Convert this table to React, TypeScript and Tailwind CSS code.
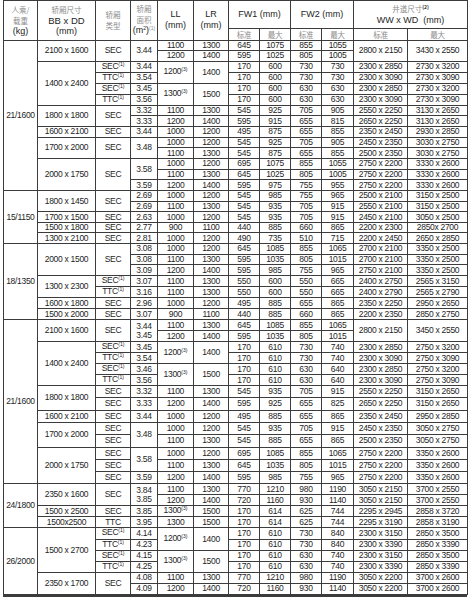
type Cell = string | [string, number];

const rows: Cell[][] = [
  // 21/1600
  [["21/1600", 14], ["2100 x 1600", 2], ["SEC", 2], ["3.44", 2], "1100", "1300", "645", "1075", "855", "1055", ["2800 x 2150", 2], ["3430 x 2550", 2]],
  ["1200", "1400", "595", "1025", "805", "1005"],
  [["1400 x 2400", 4], "SEC^(1)", "3.44", ["1200^(3)", 2], ["1400", 2], "170", "600", "730", "730", "2300 x 2850", "2730 x 3200"],
  ["TTC^(1)", "3.54", "170", "600", "730", "730", "2300 x 3090", "2730 x 3090"],
  ["SEC^(1)", "3.45", ["1300^(3)", 2], ["1500", 2], "170", "600", "630", "630", "2300 x 2850", "2730 x 3200"],
  ["TTC^(1)", "3.56", "170", "600", "630", "630", "2300 x 3090", "2730 x 3090"],
  [["1800 x 1800", 2], ["SEC", 2], "3.32", "1100", "1300", "545", "925", "705", "905", "2550 x 2250", "3130 x 2650"],
  ["3.33", "1200", "1400", "595", "915", "655", "815", "2650 x 2250", "3130 x 2650"],
  ["1600 x 2100", "SEC", "3.44", "1000", "1200", "495", "875", "655", "855", "2350 x 2450", "2930 x 2850"],
  [["1700 x 2000", 2], ["SEC", 2], ["3.48", 2], "1000", "1200", "545", "925", "705", "905", "2450 x 2350", "3030 x 2750"],
  ["1100", "1300", "545", "875", "655", "855", "2500 x 2350", "3030 x 2750"],
  [["2000 x 1750", 3], ["SEC", 3], ["3.58", 2], "1000", "1200", "695", "1075", "855", "1055", "2750 x 2200", "3330 x 2600"],
  ["1100", "1300", "645", "1025", "805", "1005", "2750 x 2200", "3330 x 2600"],
  ["3.59", "1200", "1400", "595", "975", "755", "955", "2750 x 2200", "3330 x 2600"],
  // 15/1150
  [["15/1150", 5], ["1800 x 1450", 2], ["SEC", 2], "2.69", "1000", "1200", "545", "985", "755", "965", "2500 x 2100", "3150 x 2500"],
  ["2.69", "1100", "1300", "545", "935", "705", "915", "2550 x 2100", "3150 x 2500"],
  ["1700 x 1500", "SEC", "2.63", "1000", "1200", "545", "935", "705", "915", "2450 x 2100", "3050 x 2500"],
  ["1500 x 1800", "SEC", "2.77", "900", "1100", "440", "885", "660", "865", "2200 x 2300", "2850x 2700"],
  ["1300 x 2100", "SEC", "2.81", "1000", "1200", "490", "735", "510", "715", "2200 x 2450", "2650 x 2850"],
  // 18/1350
  [["18/1350", 7], ["2000 x 1500", 3], ["SEC", 3], "3.08", "1000", "1200", "645", "1085", "855", "1065", "2700 x 2100", "3350 x 2500"],
  ["3.08", "1100", "1300", "595", "1035", "805", "1015", "2700 x 2100", "3350 x 2500"],
  ["3.09", "1200", "1400", "595", "985", "755", "965", "2750 x 2100", "3350 x 2500"],
  [["1300 x 2300", 2], "SEC^(1)", "3.07", "1100", "1300", "550", "600", "550", "665", "2400 x 2750", "2565 x 3150"],
  ["TTC^(1)", "3.16", "1100", "1300", "550", "600", "550", "665", "2400 x 2790", "2565 x 2790"],
  ["1600 x 1800", "SEC", "2.96", "1000", "1200", "495", "885", "655", "865", "2350 x 2250", "2950 x 2650"],
  ["1500 x 2000", "SEC", "3.07", "900", "1100", "440", "885", "660", "865", "2200 x 2350", "2850 x 2750"],
  // 21/1600
  [["21/1600", 14], ["2100 x 1600", 2], ["SEC", 2], ["3.44|3.45", 2], "1100", "1300", "645", "1085", "855", "1065", ["2800 x 2150", 2], ["3450 x 2550", 2]],
  ["1200", "1400", "595", "1035", "805", "1015"],
  [["1400 x 2400", 4], "SEC^(1)", "3.45", ["1200^(3)", 2], ["1400", 2], "170", "610", "730", "740", "2300 x 2850", "2750 x 3200"],
  ["TTC^(1)", "3.54", "170", "610", "730", "740", "2300 x 3090", "2750 x 3090"],
  ["SEC^(1)", "3.46", ["1300^(3)", 2], ["1500", 2], "170", "610", "630", "640", "2300 x 2850", "2750 x 3200"],
  ["TTC^(1)", "3.56", "170", "610", "630", "640", "2300 x 3090", "2750 x 3090"],
  [["1800 x 1800", 2], "SEC", "3.32", "1100", "1300", "545", "935", "705", "915", "2550 x 2250", "3150 x 2650"],
  ["SEC", "3.33", "1200", "1400", "595", "925", "655", "825", "2650 x 2250", "3150 x 2650"],
  ["1600 x 2100", "SEC", "3.44", "1000", "1200", "495", "885", "655", "865", "2350 x 2450", "2950 x 2850"],
  [["1700 x 2000", 2], "SEC", ["3.48", 2], "1000", "1200", "545", "935", "705", "915", "2450 x 2350", "3050 x 2750"],
  ["SEC", "1100", "1300", "545", "885", "655", "865", "2500 x 2350", "3050 x 2750"],
  [["2000 x 1750", 3], "SEC", ["3.58", 2], "1000", "1200", "695", "1085", "855", "1065", "2750 x 2200", "3350 x 2600"],
  ["SEC", "1100", "1300", "645", "1035", "805", "1015", "2750 x 2200", "3350 x 2600"],
  ["SEC", "3.59", "1200", "1400", "595", "985", "755", "965", "2750 x 2200", "3350 x 2600"],
  // 24/1800
  [["24/1800", 4], ["2350 x 1600", 2], ["SEC", 2], ["3.84|3.85", 2], "1100", "1300", "770", "1210", "980", "1190", "3050 x 2150", "3700 x 2550"],
  ["1200", "1400", "720", "1160", "930", "1140", "3050 x 2150", "3700 x 2550"],
  ["1500 x 2500", "SEC", "3.85", "1300^(3)", "1500", "170", "614", "625", "744", "2295 x 2945", "2858 x 3720"],
  ["1500x2500", "TTC", "3.95", "1300", "1500", "170", "614", "625", "744", "2295 x 3190", "2858 x 3190"],
  // 26/2000
  [["26/2000", 6], ["1500 x 2700", 4], "SEC^(1)", "4.14", ["1200^(3)", 2], ["1400", 2], "170", "610", "730", "840", "2300 x 3150", "2850 x 3500"],
  ["TTC^(1)", "4.23", "170", "610", "730", "840", "2300 x 3390", "2850 x 3390"],
  ["SEC^(1)", "4.15", ["1300^(3)", 2], ["1500", 2], "170", "610", "630", "740", "2300 x 3150", "2850 x 3500"],
  ["TTC^(1)", "4.25", "170", "610", "630", "740", "2300 x 3390", "2850 x 3390"],
  [["2350 x 1700", 2], ["SEC", 2], "4.08", "1100", "1300", "770", "1210", "980", "1190", "3050 x 2200", "3700 x 2600"],
  ["4.09", "1200", "1400", "720", "1160", "930", "1140", "3050 x 2200", "3700 x 2600"],
];

function rowHeight(i: number) {
  if (i < 24) return "h-[10.65px]";
  if (i < 32) return "h-[11px]";
  if (i < 40) return "h-[12.3px]";
  if (i < 44) return "h-[11px]";
  return "h-[11.1px]";
}

function Text({ s }: { s: string }) {
  return (
    <>
      {s.split("|").map((line, i) => {
        const [main, sup] = line.split("^");
        return (
          <div key={i} className="leading-[9px]">
            {main}
            {sup && <span className="relative -top-[3px] text-[5px] tracking-normal">{sup}</span>}
          </div>
        );
      })}
    </>
  );
}

const cjk = "font-['Noto_Sans_CJK_SC',sans-serif] text-[#8c8c8c] text-[7.5px] leading-[11px]";
const td = "border border-[#3c3c3c] p-0 text-center align-middle whitespace-nowrap overflow-hidden";

export default function App() {
  return (
    <div className="w-[469px] h-[600px] bg-white overflow-hidden font-['Liberation_Sans',Arial,sans-serif] text-[#1e1e1e]">
      <table className="table-fixed border-collapse w-[464px] ml-[3px] text-[8.5px] tracking-[-0.3px]">
        <colgroup>
          <col className="w-[34px]" />
          <col className="w-[58px]" />
          <col className="w-[35px]" />
          <col className="w-[27px]" />
          <col className="w-[36px]" />
          <col className="w-[35px]" />
          <col className="w-[31px]" />
          <col className="w-[31px]" />
          <col className="w-[31px]" />
          <col className="w-[32px]" />
          <col className="w-[54px]" />
          <col className="w-[60px]" />
        </colgroup>
        <thead>
          <tr className="h-[27.5px] text-[9px] tracking-normal">
            <td rowSpan={2} className={td}>
              <div className={cjk}>人乘/</div>
              <div className={cjk}>载重</div>
              <div className="leading-[11px]">(kg)</div>
            </td>
            <td rowSpan={2} className={td}>
              <div className={cjk}>轿厢尺寸</div>
              <div className="leading-[11px] text-[9.5px]">BB x DD</div>
              <div className="leading-[11px]">(mm)</div>
            </td>
            <td rowSpan={2} className={td}>
              <div className={cjk}>轿厢</div>
              <div className={cjk}>类型</div>
            </td>
            <td rowSpan={2} className={td}>
              <div className={cjk}>轿厢</div>
              <div className={cjk}>面积</div>
              <div className="leading-[11px]">
                (m<span className="relative -top-[3px] text-[5px]">2</span>)
                <span className="relative -top-[3px] text-[5px] text-[#8c8c8c]">(1)</span>
              </div>
            </td>
            <td rowSpan={2} className={td}>
              <div className="leading-[11px]">LL</div>
              <div className="leading-[11px]">(mm)</div>
            </td>
            <td rowSpan={2} className={td}>
              <div className="leading-[11px]">LR</div>
              <div className="leading-[11px]">(mm)</div>
            </td>
            <td colSpan={2} className={td}>FW1 (mm)</td>
            <td colSpan={2} className={td}>FW2 (mm)</td>
            <td colSpan={2} className={td}>
              <div className={cjk}>
                井道尺寸<span className="relative -top-[3px] text-[5px] text-[#1e1e1e] font-bold">(2)</span>
              </div>
              <div className="leading-[11px]">WW x WD&nbsp;&nbsp;(mm)</div>
            </td>
          </tr>
          <tr className="h-[11px]">
            {["标准", "最大", "标准", "最大", "标准", "最大"].map((t, i) => (
              <td key={i} className={td}>
                <div className={cjk}>{t}</div>
              </td>
            ))}
          </tr>
        </thead>
        <tbody>
          {rows.map((cells, i) => (
            <tr key={i} className={rowHeight(i)}>
              {cells.map((c, j) => {
                const [s, span] = typeof c === "string" ? [c, 1] : c;
                return (
                  <td key={j} rowSpan={span} className={td}>
                    <Text s={s} />
                  </td>
                );
              })}
            </tr>
          ))}
        </tbody>
      </table>
      <div className="w-[464px] h-[2px] ml-[3px] bg-[#3c3c3c]" />
    </div>
  );
}
